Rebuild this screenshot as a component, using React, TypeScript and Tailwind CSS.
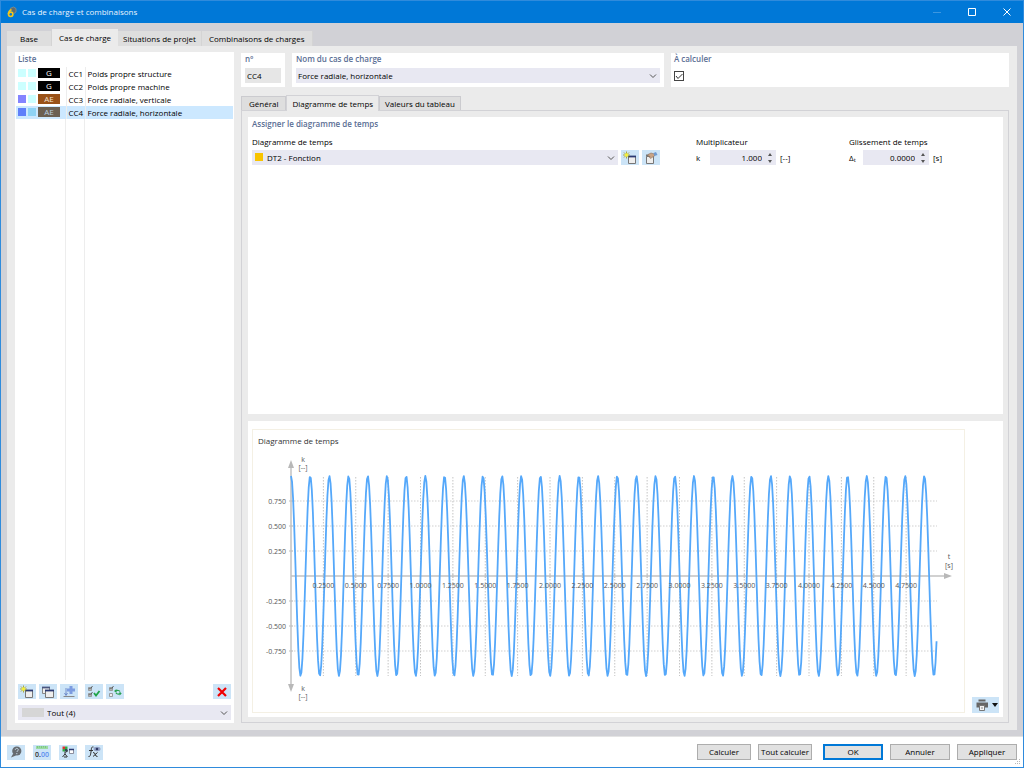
import type { ReactNode } from "react";
import { useState } from "react";

const MAIN_TABS = [
  "Base",
  "Cas de charge",
  "Situations de projet",
  "Combinaisons de charges",
];
const SUB_TABS = ["Général", "Diagramme de temps", "Valeurs du tableau"];

const LOAD_CASES = [
  { id: "CC1", name: "Poids propre structure", type: "G", first: "bg-[#ccffff]", second: "bg-[#ccffff]", badge: "bg-black text-white" },
  { id: "CC2", name: "Poids propre machine", type: "G", first: "bg-[#ccffff]", second: "bg-[#ccffff]", badge: "bg-black text-white" },
  { id: "CC3", name: "Force radiale, verticale", type: "AE", first: "bg-[#8484ff]", second: "bg-[#ccffff]", badge: "bg-[#9a5218] text-[#f3e3d4]" },
  { id: "CC4", name: "Force radiale, horizontale", type: "AE", first: "bg-[#5f7ffa]", second: "bg-[#8fd3f5]", badge: "bg-[#6c6052] text-[#b9cfe0]" },
];

// Chart geometry
const X0 = 38;
const Y0 = 146;
const PX_PER_SECOND = 129.5;
const AMPLITUDE = 100;
const PERIOD = 0.1482;
const DURATION = 4.985;
const SAMPLES = 620;

const curve = Array.from({ length: SAMPLES + 1 }, (_, i) => {
  const t = (i / SAMPLES) * DURATION;
  const x = X0 + t * PX_PER_SECOND;
  const y = Y0 - AMPLITUDE * Math.cos((2 * Math.PI * t) / PERIOD);
  return `${x.toFixed(2)},${y.toFixed(2)}`;
}).join(" ");

const timeTicks = Array.from({ length: 19 }, (_, i) => (i + 1) * 0.25);
const valueTicks = [0.75, 0.5, 0.25, -0.25, -0.5, -0.75];

const Chevron = () => (
  <svg
    aria-hidden="true"
    className="pointer-events-none absolute top-1 right-[3px] h-2 w-2"
    fill="none"
    stroke="#555"
    viewBox="0 0 8 8"
  >
    <path d="M1 2.5 4 5.5 7 2.5" />
  </svg>
);

const Heading = ({ children }: { children: ReactNode }) => (
  <h2 className="font-semibold text-[#5a6e94] leading-3">{children}</h2>
);

const IconButton = ({
  label,
  children,
}: {
  label: string;
  children: ReactNode;
}) => (
  <button
    aria-label={label}
    className="flex h-[15px] w-[18px] items-center justify-center bg-[#cce4f7]"
    type="button"
  >
    {children}
  </button>
);

const Icon = ({ children }: { children: ReactNode }) => (
  <svg aria-hidden="true" className="h-3.5 w-4" fill="none" viewBox="0 0 16 14">
    {children}
  </svg>
);

const NewIcon = () => (
  <Icon>
    <path d="M6.5 5.500h7v7h-7z" fill="#eee" stroke="#777" />
    <path d="M6 5.500h8" stroke="#2c3a72" strokeWidth="1.8" />
    <path d="M4.500 .5v7M1 4h7M2 1.500l5 5M7 1.500l-5 5" stroke="#a8a22c" strokeWidth=".9" />
    <circle cx="4.500" cy="4" fill="#f4f03c" r="1.800" />
  </Icon>
);

const CopyIcon = () => (
  <Icon>
    <path d="M2.500 2.500h7v6h-7z" fill="#eee" stroke="#888" />
    <path d="M2 2.500h8" stroke="#4a5680" strokeWidth="1.8" />
    <path d="M5.500 5.500h8v7h-8z" fill="#eee" stroke="#777" />
    <path d="M5 5.500h9" stroke="#2c3a72" strokeWidth="1.8" />
  </Icon>
);

const AddSupportIcon = () => (
  <Icon>
    <path d="M10 1v8M6 5h8" stroke="#7d9ce0" strokeWidth="3" />
    <path d="M5 3v7M3.500 8 5 10.500 6.500 8" stroke="#5a78c0" strokeWidth=".8" />
    <path d="M2.500 11.500h11" stroke="#888" />
  </Icon>
);

const CheckAllIcon = () => (
  <Icon>
    <path d="M2.500 2.500h3v3h-3zM2.500 8.500h3v3h-3z" fill="#eee" stroke="#888" strokeWidth=".8" />
    <path d="M3 3l1 1.500L6.500 1M3 9l1 1.500L6.500 7" stroke="#444" strokeWidth=".8" />
    <path d="M8 8l2 2.500L13.500 6" stroke="#1fa348" strokeWidth="1.8" />
  </Icon>
);

const InvertIcon = () => (
  <Icon>
    <path d="M2.500 2.500h3v3h-3zM2.500 8.500h3v3h-3z" fill="#eee" stroke="#888" strokeWidth=".8" />
    <path d="M3 3l1 1.500L6.500 1" stroke="#444" strokeWidth=".8" />
    <path d="M8.500 6c2-1 4-.5 4.500 .5M13.500 8.500c-2 1-4 .5-4.500-.5" stroke="#27a050" strokeWidth="1.200" />
    <path d="M9.500 4v4L7 6zM12.500 6.500l2.200 2-2.200 2z" fill="#27a050" />
  </Icon>
);

const DeleteIcon = () => (
  <Icon>
    <path d="M4 3l8 8M12 3l-8 8" stroke="#f00000" strokeWidth="2.200" />
  </Icon>
);

const EditIcon = () => (
  <Icon>
    <path d="M3.500 5.500h7v7h-7z" fill="#eee" stroke="#777" />
    <path d="M3 4.500h3" stroke="#777" strokeWidth="2" />
    <path d="M5 3.500l3-1.500 3.500 1v2L9.500 6 8 7.500 6.500 6.500 7 5.500 5 5z" fill="#c9a486" stroke="#8a6f5c" strokeWidth=".6" />
    <path d="M10.500 2l2.500-1 1.500 3-3 1z" fill="#6f9bd2" />
  </Icon>
);

const HelpIcon = () => (
  <Icon>
    <circle cx="8.800" cy="6" fill="#666b70" r="4.600" />
    <path d="M5.200 8.500 3 12.500l5-2z" fill="#666b70" />
    <path d="M7.300 4.900c0-2 3-2 3 0 0 1.100-1.500 1.100-1.500 2.100M8.800 8v1.200" stroke="#c5d8e6" />
  </Icon>
);

const UnitsIcon = () => (
  <Icon>
    <path d="M2 1h12v3H2z" fill="#9bdba2" />
    <path d="M3.500 1v2M5.500 1v1.500M7.500 1v2M9.500 1v1.500M11.500 1v2" stroke="#6dbb78" strokeWidth=".7" />
    <text fill="#333" fontSize="7" fontWeight="600" x="1" y="12">
      0.<tspan fill="#5b8def">00</tspan>
    </text>
  </Icon>
);

const ModelIcon = () => (
  <Icon>
    <path d="M2.500 1.500H5V4H2.500z" fill="#d33" />
    <path d="M5 1.500h2.500V4H5z" fill="#3a4" />
    <path d="M2.500 4H5v2.500H2.500z" fill="#3a4" />
    <path d="M5 4h2.500v2.500H5z" fill="#345" />
    <path d="M5 6.500V9M2.500 12 5 9l2.500 3M4 12h3M5.500 7.500 8 5.500" stroke="#333" />
    <path d="M9.500 4.500h4v4h-4z" fill="#fff" stroke="#778" strokeWidth=".8" />
    <path d="M9 4.500h5" stroke="#2c3a72" strokeWidth="1.500" />
  </Icon>
);

const FormulaIcon = () => (
  <Icon>
    <path d="M7.500 2C5 1.500 5.500 4 5 7s-.8 5-2.500 4.500M3 5.500h4" stroke="#333" />
    <path d="M7 7.500c3-.5 1.500 4.500 4.500 4M11.500 7.500 7 11.500" stroke="#333" />
    <ellipse cx="11" cy="4" fill="#93a2c6" rx="3.500" ry="2.200" />
    <circle cx="11" cy="4" fill="#303a66" r="1.300" />
  </Icon>
);

const PrintIcon = () => (
  <Icon>
    <path d="M4.500 1.500h7v2h-7z" fill="#666" />
    <path d="M2.500 4.500h11.500v5H2.500z" fill="#666" />
    <path d="M5.500 7.500h5v5h-5z" fill="#f3f3f3" stroke="#777" />
    <path d="M7 10h2" stroke="#888" />
  </Icon>
);

const AppIcon = () => (
  <svg aria-hidden="true" className="h-3 w-3" fill="none" viewBox="0 0 12 12">
    <path d="M4 2.500 7.500 1l2.500 1.500V6L8 7.500" fill="#5f6b70" stroke="#8a8f86" strokeWidth=".8" />
    <path d="M5.500 3.500C3.500 4.500 2.500 6 2.500 8" stroke="#f5c518" strokeWidth="1.800" />
    <circle cx="4.700" cy="8.300" r="2.200" stroke="#f5c518" strokeWidth="1.600" />
  </svg>
);

const NumberField = ({
  id,
  title,
  symbol,
  unit,
  initial,
}: {
  id: string;
  title: string;
  symbol: ReactNode;
  unit: string;
  initial: string;
}) => {
  const [value, setValue] = useState(initial);
  const decimals = initial.split(".")[1].length;
  const step = (delta: number) =>
    setValue((Number(value) + delta).toFixed(decimals));

  return (
    <div className="min-w-0">
      <label className="block leading-3" htmlFor={id}>
        {title}
      </label>
      <div className="mt-0.5 flex h-[15px] items-center">
        <span className="w-3.5 shrink-0">{symbol}</span>
        <div className="flex h-full w-[66px] shrink-0 items-center bg-[#e8e8f2] pr-1">
          <input
            className="h-full w-full min-w-0 bg-transparent pr-1.5 text-right outline-none"
            id={id}
            onChange={(e) => setValue(e.target.value)}
            type="text"
            value={value}
          />
          <span className="flex shrink-0 flex-col gap-1">
            <button aria-label={`Augmenter ${title}`} className="block" onClick={() => step(1)} type="button">
              <svg aria-hidden="true" className="h-[3px] w-1" viewBox="0 0 4 3">
                <path d="M2 0l2 3H0z" fill="#555" />
              </svg>
            </button>
            <button aria-label={`Diminuer ${title}`} className="block" onClick={() => step(-1)} type="button">
              <svg aria-hidden="true" className="h-[3px] w-1" viewBox="0 0 4 3">
                <path d="M2 3l2-3H0z" fill="#555" />
              </svg>
            </button>
          </span>
        </div>
        <span className="ml-1">{unit}</span>
      </div>
    </div>
  );
};

const TimeDiagram = () => (
  <svg
    aria-label="Diagramme de temps"
    className="block w-full"
    fill="#555"
    fontSize="7"
    role="img"
    viewBox="0 0 711 282"
  >
    <text fill="#333" fontSize="8" x="5" y="14">
      Diagramme de temps
    </text>

    {valueTicks.map((v) => (
      <g key={v}>
        <path d={`M${X0} ${Y0 - v * AMPLITUDE}h646`} stroke="#cfcfcf" strokeDasharray="1.5 1.5" />
        <path d={`M${X0 - 2} ${Y0 - v * AMPLITUDE}h4`} stroke="#bbb" />
        <text textAnchor="end" x={X0 - 5} y={Y0 - v * AMPLITUDE + 3}>
          {v.toFixed(3)}
        </text>
      </g>
    ))}
    {timeTicks.map((t) => (
      <g key={t}>
        <path d={`M${X0 + t * PX_PER_SECOND} ${Y0 - 99}v199`} stroke="#c4c4c4" strokeDasharray="1.5 1.5" />
        <path d={`M${X0 + t * PX_PER_SECOND} ${Y0 - 2}v4`} stroke="#bbb" />
      </g>
    ))}

    {/* Axes */}
    <path d={`M${X0} 37v218M${X0} ${Y0}h654`} stroke="#c2c2c2" strokeWidth="1.5" />
    <path
      d={`M${X0} 30l3 8h-6zM${X0} 262l3-8h-6zM${X0 + 661} ${Y0}l-8-3v6z`}
      fill="#b8b8b8"
    />
    <polyline fill="none" points={curve} stroke="#55a8fa" strokeLinejoin="round" strokeWidth="1.8" />

    <g textAnchor="middle">
      {timeTicks.map((t) => (
        <text key={t} x={X0 + t * PX_PER_SECOND} y={Y0 + 12}>
          {t.toFixed(4)}
        </text>
      ))}
      <text x="50" y="32">k</text>
      <text x="50" y="40">[--]</text>
      <text x="50" y="261">k</text>
      <text x="50" y="269">[--]</text>
      <text x="696" y="129">t</text>
      <text x="696" y="138">[s]</text>
    </g>
  </svg>
);

const LoadCaseList = () => {
  const [selected, setSelected] = useState("CC4");

  return (
    <section className="flex w-[219px] shrink-0 flex-col bg-white px-px pt-px">
      <div className="pl-0.5">
        <Heading>Liste</Heading>
      </div>
      <div className="mt-0.5 flex flex-1 flex-col">
        <table className="w-full table-fixed border-collapse">
          <colgroup>
            <col className="w-[50px]" />
            <col className="w-[19px]" />
            <col />
          </colgroup>
          <tbody>
            {LOAD_CASES.map((item) => (
              <tr
                className={selected === item.id ? "h-[13px] bg-[#cce8ff]" : "h-[13px]"}
                key={item.id}
                onClick={() => setSelected(item.id)}
              >
                <td className="border-[#ededed] border-r p-0">
                  <div className="flex h-[13px] items-start gap-0.5 pt-px pl-0.5">
                    <span className={`mt-px size-2 ${item.first}`} />
                    <span className={`mt-px size-2 ${item.second}`} />
                    <span className={`h-2.5 w-[22px] text-center leading-[10px] ${item.badge}`}>
                      {item.type}
                    </span>
                  </div>
                </td>
                <td className="border-[#ededed] border-r p-0 pl-0.5 leading-[13px]">{item.id}</td>
                <td className="p-0 pl-0.5 leading-[13px]">{item.name}</td>
              </tr>
            ))}
          </tbody>
        </table>
        <div className="flex flex-1">
          <div className="w-[50px] border-[#ededed] border-r" />
          <div className="w-[19px] border-[#ededed] border-r" />
        </div>
      </div>
      <div className="mt-1 flex gap-[3px] px-0.5">
        <IconButton label="Nouveau"><NewIcon /></IconButton>
        <IconButton label="Copier"><CopyIcon /></IconButton>
        <IconButton label="Ajouter"><AddSupportIcon /></IconButton>
        <div className="ml-1 flex flex-1 gap-[3px]">
          <IconButton label="Tout sélectionner"><CheckAllIcon /></IconButton>
          <IconButton label="Inverser la sélection"><InvertIcon /></IconButton>
        </div>
        <IconButton label="Supprimer"><DeleteIcon /></IconButton>
      </div>
      <div className="relative mx-0.5 mt-1.5 mb-[3px]">
        <select aria-label="Filtre" className="block h-[15px] w-full appearance-none bg-[#e8e8f2] pl-[29px] outline-none">
          <option>Tout (4)</option>
        </select>
        <span className="pointer-events-none absolute top-[3px] left-1 h-[9px] w-[22px] bg-[#d6d6d6]" />
        <Chevron />
      </div>
    </section>
  );
};

const TimeDiagramTab = () => (
  <div className="flex flex-1 flex-col gap-[7px] border border-[#d2d2d6] pt-1.5 pr-[5px] pb-[5px] pl-1.5">
    <section className="min-h-60 flex-1 bg-white px-1 pt-px">
      <Heading>Assigner le diagramme de temps</Heading>
      <div className="mt-1.5 grid grid-cols-[408fr_117fr_150fr] gap-9">
        <div className="min-w-0">
          <label className="block leading-3" htmlFor="diagram">
            Diagramme de temps
          </label>
          <div className="mt-0.5 flex gap-[3px]">
            <div className="relative min-w-0 flex-1">
              <select className="block h-[15px] w-full appearance-none bg-[#e8e8f2] pl-[15px] outline-none" id="diagram">
                <option>DT2 - Fonction</option>
              </select>
              <span className="pointer-events-none absolute top-[3px] left-[3px] size-2 bg-[#f8c400]" />
              <Chevron />
            </div>
            <IconButton label="Nouveau diagramme"><NewIcon /></IconButton>
            <IconButton label="Modifier le diagramme"><EditIcon /></IconButton>
          </div>
        </div>
        <NumberField id="factor" initial="1.000" symbol="k" title="Multiplicateur" unit="[--]" />
        <NumberField
          id="shift"
          initial="0.0000"
          symbol={<>Δ<sub>t</sub></>}
          title="Glissement de temps"
          unit="[s]"
        />
      </div>
    </section>

    <section className="flex items-end gap-[7px] bg-white px-1 pt-2 pb-1">
      <div className="min-w-0 flex-1 border border-[#f4f0e4]">
        <TimeDiagram />
      </div>
      <button aria-label="Imprimer" className="flex h-4 w-[27px] shrink-0 items-center justify-center gap-0.5 bg-[#cce4f7]" type="button">
        <PrintIcon />
        <svg aria-hidden="true" className="h-1 w-1.5" viewBox="0 0 6 4">
          <path d="M0 0h6L3 4z" fill="#111" />
        </svg>
      </button>
    </section>
  </div>
);

export default function App() {
  const [tab, setTab] = useState("Cas de charge");
  const [subTab, setSubTab] = useState("Diagramme de temps");

  return (
    <div className="flex min-h-screen flex-col border border-[#2f8bdc] bg-[#d1d1d6] font-['Open_Sans','Noto_Sans',sans-serif] font-medium text-[8px] text-black leading-3">
      <header className="flex h-[22px] items-center gap-1 bg-[#0078d7] pl-[5px] text-[#eaf4fd]">
        <AppIcon />
        <h1 className="flex-1">Cas de charge et combinaisons</h1>
        <button aria-label="Réduire" className="flex w-8 justify-center" type="button">
          <svg aria-hidden="true" className="size-2" stroke="#3d97e0" viewBox="0 0 8 8">
            <path d="M0 4.500h8" />
          </svg>
        </button>
        <button aria-label="Agrandir" className="flex w-[30px] justify-center" type="button">
          <svg aria-hidden="true" className="size-2" fill="none" stroke="#fff" viewBox="0 0 8 8">
            <path d="M.5.5h7v7h-7z" />
          </svg>
        </button>
        <button aria-label="Fermer" className="flex w-8 justify-center" type="button">
          <svg aria-hidden="true" className="size-2" fill="none" stroke="#fff" viewBox="0 0 8 8">
            <path d="M.5.5l7 7M7.500.5l-7 7" />
          </svg>
        </button>
      </header>

      <main className="flex flex-1 flex-col p-1.5">
        <nav className="flex h-[17px] items-end">
          {MAIN_TABS.map((name) => (
            <button
              className={
                tab === name
                  ? "h-[17px] bg-[#ebebeb] px-[7px]"
                  : "h-[15px] border-[#d4d4d4] border-r bg-[#dedede] px-[5px] first:px-[13px] last:px-[7px]"
              }
              key={name}
              onClick={() => setTab(name)}
              type="button"
            >
              {name}
            </button>
          ))}
        </nav>
        <div className="flex flex-1 gap-[7px] bg-[#ebebeb] px-2 pt-1.5 pb-[7px]">
          <LoadCaseList />
          <div className="flex min-w-0 flex-1 flex-col pt-px">
            <div className="grid h-[34px] grid-cols-[44px_11fr_10fr] gap-[7px]">
              <div className="bg-white px-1">
                <label className="block font-semibold text-[#5a6e94] leading-3" htmlFor="number">
                  n°
                </label>
                <input className="mt-[3px] block h-[15px] w-full bg-[#e6e6e6] px-0.5 outline-none" id="number" readOnly value="CC4" />
              </div>
              <div className="bg-white px-1">
                <label className="block font-semibold text-[#5a6e94] leading-3" htmlFor="name">
                  Nom du cas de charge
                </label>
                <div className="relative mt-[3px]">
                  <select className="block h-[15px] w-full appearance-none bg-[#e8e8f2] px-0.5 outline-none" id="name">
                    <option>Force radiale, horizontale</option>
                  </select>
                  <Chevron />
                </div>
              </div>
              <div className="bg-white px-[3px]">
                <label className="block font-semibold text-[#5a6e94] leading-3" htmlFor="compute">
                  À calculer
                </label>
                <div className="relative mt-1.5 size-2.5">
                  <input className="peer block size-2.5 appearance-none border border-[#444] bg-white" defaultChecked id="compute" type="checkbox" />
                  <svg aria-hidden="true" className="pointer-events-none absolute inset-0 hidden size-2.5 peer-checked:block" fill="none" stroke="#333" viewBox="0 0 10 10">
                    <path d="M2 5l2 2.500L8.500 3" />
                  </svg>
                </div>
              </div>
            </div>
            <nav className="mt-2 flex h-[15px] items-end">
              {SUB_TABS.map((name) => (
                <button
                  className={
                    subTab === name
                      ? "relative -mb-px h-4 border border-[#d2d2d6] border-b-0 bg-[#ebebeb] px-[5px] first:px-[7px]"
                      : "h-3.5 border border-[#cbcbcf] border-b-0 bg-[#dedede] px-[5px] first:px-[7px]"
                  }
                  key={name}
                  onClick={() => setSubTab(name)}
                  type="button"
                >
                  {name}
                </button>
              ))}
            </nav>
            <TimeDiagramTab />
          </div>
        </div>
      </main>

      <footer className="relative flex h-[31px] items-center justify-between border-[#e4e4e4] border-t bg-white px-1.5">
        <div className="flex gap-2">
          <IconButton label="Aide"><HelpIcon /></IconButton>
          <IconButton label="Unités"><UnitsIcon /></IconButton>
          <IconButton label="Modèle"><ModelIcon /></IconButton>
          <IconButton label="Formules"><FormulaIcon /></IconButton>
        </div>
        <div className="flex items-center gap-[7px]">
          <button className="h-4 w-[54px] border border-[#adadad] bg-[#e1e1e1]" type="button">
            Calculer
          </button>
          <button className="mr-1 h-4 w-[54px] whitespace-nowrap border border-[#adadad] bg-[#e1e1e1]" type="button">
            Tout calculer
          </button>
          <button className="h-4 w-[60px] border-2 border-[#0078d7] bg-[#e1e1e1] leading-3" type="button">
            OK
          </button>
          <button className="h-4 w-[60px] border border-[#adadad] bg-[#e1e1e1]" type="button">
            Annuler
          </button>
          <button className="h-4 w-[60px] border border-[#adadad] bg-[#e1e1e1]" type="button">
            Appliquer
          </button>
        </div>
        <svg aria-hidden="true" className="absolute right-0.5 bottom-0.5 size-1.5" fill="#b8b8b8" viewBox="0 0 6 6">
          <path d="M4 0h1v1H4zM2 2h1v1H2zM4 2h1v1H4zM0 4h1v1H0zM2 4h1v1H2zM4 4h1v1H4z" />
        </svg>
      </footer>
    </div>
  );
}
